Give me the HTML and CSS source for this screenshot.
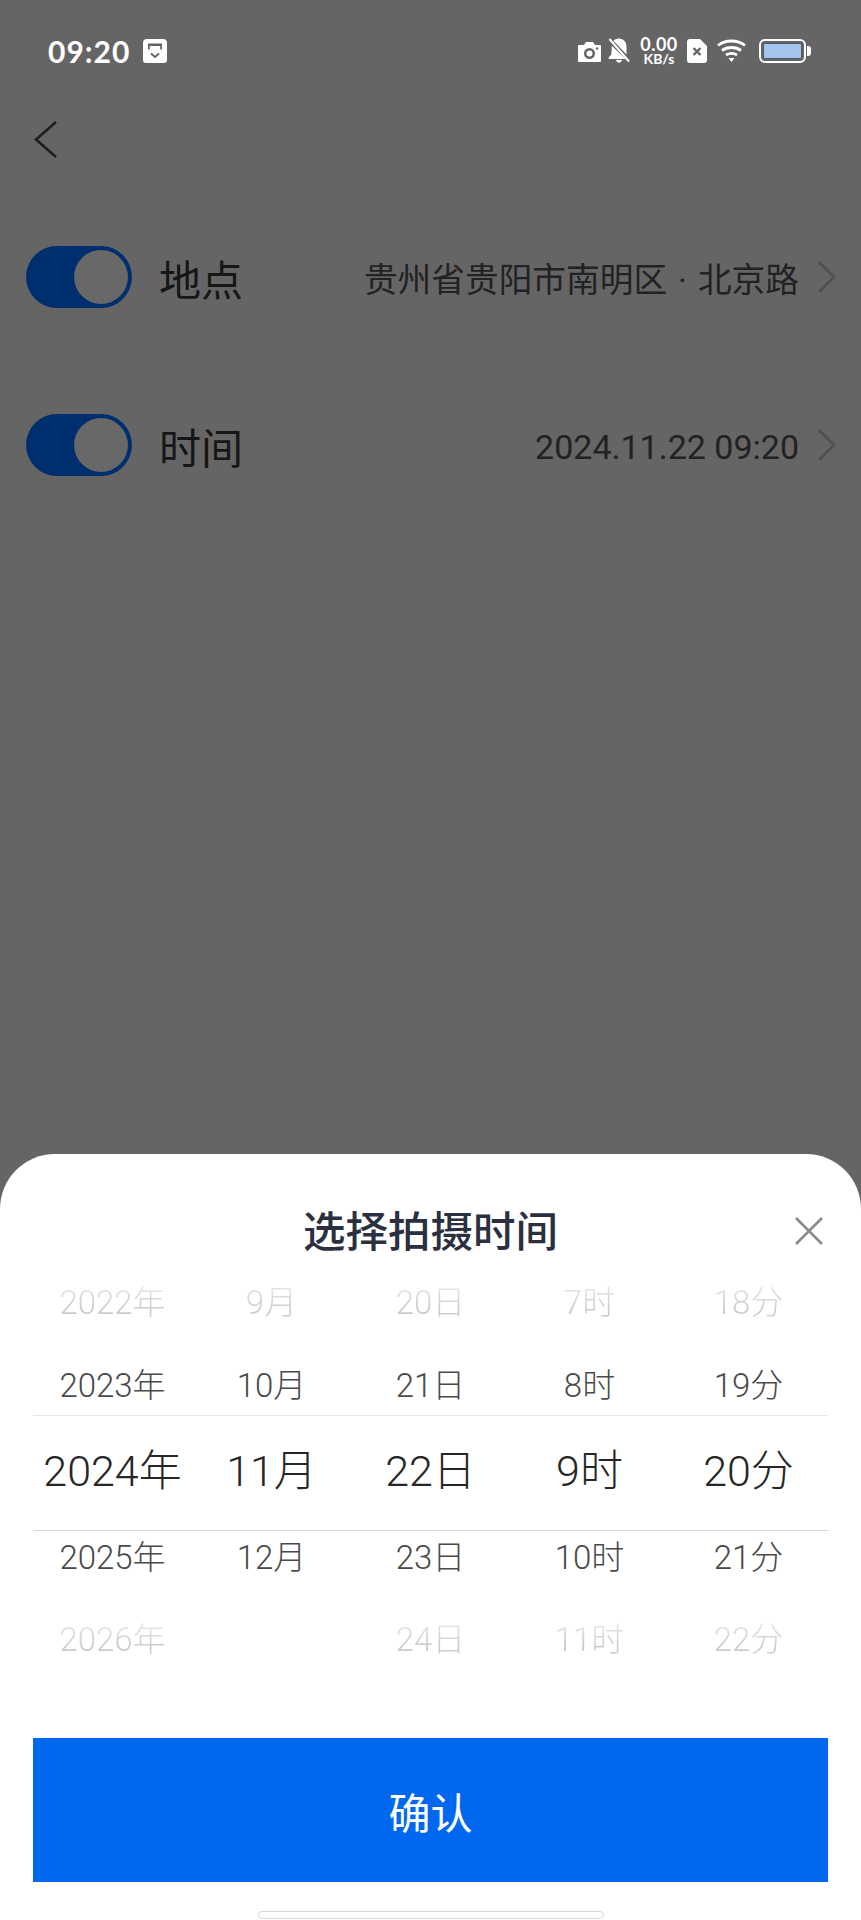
FILE: index.html
```html
<!DOCTYPE html>
<html lang="zh-CN">
<head>
    <meta charset="UTF-8">
    <meta name="viewport" content="width=device-width, initial-scale=1.0">
    <title>选择拍摄时间</title>
    <link rel="stylesheet" href="styles.css">
</head>
<body>
    <div class="page">
        <div class="status-bar">
            <div class="status-left">
                <span class="clock">09:20</span>
                <svg class="icon-storage" viewBox="0 0 24 24">
                    <path fill="#fff" fill-rule="evenodd" d="M4 0h16a4 4 0 0 1 4 4v17a3 3 0 0 1-3 3H3a3 3 0 0 1-3-3V4a4 4 0 0 1 4-4zM5 4.500v6h1.800V7h10.400v3.500H19v-6z"/>
                    <path fill="none" stroke="#666" stroke-width="2" d="M8 14.500l4 3.500 4-3.500"/>
                </svg>
            </div>
            <div class="status-right">
                <svg class="icon-camera" viewBox="0 0 23 20">
                    <path fill="#fff" fill-rule="evenodd" d="M1 3h5l2-3h7l2 3h5a1 1 0 0 1 1 1v15a1 1 0 0 1-1 1H1a1 1 0 0 1-1-1V4a1 1 0 0 1 1-1zM11.500 6a5.500 5.500 0 1 0 0 11a5.500 5.500 0 0 0 0-11zM11.500 8.500a3 3 0 1 1 0 6a3 3 0 0 1 0-6z"/>
                    <circle cx="19" cy="6.500" r="1.200" fill="#666"/>
                </svg>
                <svg class="icon-bell" viewBox="0 0 22 25">
                    <path fill="#fff" d="M5.500 2.800C7 1.200 9 .5 11 .5c4.800 0 7.500 3.600 7.500 8.500v7.500zM3.800 7.800L17.500 21H1.500c-1 0-1.300-1-.6-1.800L3.300 16.500c.4-2.800.3-5.800.5-8.700zM8 22h6c-.5 1.700-1.700 2.800-3 2.800S8.500 23.700 8 22z"/>
                    <path stroke="#fff" stroke-width="2" d="M1.500 1L21 23.500"/>
                </svg>
                <div class="net-speed">
                    <span class="net-value">0.00</span>
                    <span class="net-unit">KB/s</span>
                </div>
                <svg class="icon-sim" viewBox="0 0 20 24">
                    <path fill="#fff" d="M3 0h10l7 7v14a3 3 0 0 1-3 3H3a3 3 0 0 1-3-3V3a3 3 0 0 1 3-3z"/>
                    <path stroke="#666" stroke-width="2.400" d="M6.500 9l7 7M13.500 9l-7 7"/>
                </svg>
                <svg class="icon-wifi" viewBox="0 0 29 23">
                    <g fill="none" stroke="#fff" stroke-width="2.800">
                        <path d="M1 6.500C8.500 .5 20.500 .5 28 6.500"/>
                        <path d="M5 11.500c5.500-4 13.500-4 19 0"/>
                        <path d="M9 16c3.300-2 7.700-2 11 0"/>
                    </g>
                    <path fill="#fff" d="M11.500 19h6l-3 4z"/>
                </svg>
                <div class="battery">
                    <div class="battery-body"><div class="battery-fill"></div></div>
                    <div class="battery-tip"></div>
                </div>
            </div>
        </div>

        <div class="nav">
            <svg class="icon-back" viewBox="0 0 23 37">
                <path fill="none" stroke="#1e1e1e" stroke-width="2.600" d="M22 1L2 18.500 22 36"/>
            </svg>
        </div>

        <div class="setting-row">
            <div class="toggle"><div class="toggle-knob"></div></div>
            <span class="setting-label">地点</span>
            <span class="setting-value">贵州省贵阳市南明区<span class="value-dot">·</span>北京路</span>
            <svg class="icon-more" viewBox="0 0 18 32">
                <path fill="none" stroke="#505050" stroke-width="3" d="M1 1l15 15L1 31"/>
            </svg>
        </div>

        <div class="setting-row">
            <div class="toggle"><div class="toggle-knob"></div></div>
            <span class="setting-label">时间</span>
            <span class="setting-value date">2024.11.22 09:20</span>
            <svg class="icon-more" viewBox="0 0 18 32">
                <path fill="none" stroke="#505050" stroke-width="3" d="M1 1l15 15L1 31"/>
            </svg>
        </div>

        <div class="sheet">
            <div class="sheet-header">
                <h1 class="sheet-title">选择拍摄时间</h1>
                <svg class="icon-close" viewBox="0 0 28 28">
                    <path stroke="#8a8a8a" stroke-width="2.600" d="M1 1l26 26M27 1L1 27"/>
                </svg>
            </div>

            <div class="picker">
                <div class="picker-row far top">
                    <span>2022年</span><span>9月</span><span>20日</span><span>7时</span><span>18分</span>
                </div>
                <div class="picker-row near top">
                    <span>2023年</span><span>10月</span><span>21日</span><span>8时</span><span>19分</span>
                </div>
                <div class="picker-row current">
                    <span>2024年</span><span>11月</span><span>22日</span><span>9时</span><span>20分</span>
                </div>
                <div class="picker-row near bottom">
                    <span>2025年</span><span>12月</span><span>23日</span><span>10时</span><span>21分</span>
                </div>
                <div class="picker-row far bottom">
                    <span>2026年</span><span></span><span>24日</span><span>11时</span><span>22分</span>
                </div>
            </div>

            <button class="confirm-button">确认</button>
            <div class="home-bar"></div>
        </div>
    </div>
</body>
</html>
```

FILE: styles.css
```css
* {
    box-sizing: border-box;
}

body {
    margin: 0;
    font-family: Roboto, "Noto Sans CJK SC", sans-serif;
    background-color: #656565;
}

.page {
    display: flex;
    flex-direction: column;
    height: 1920px;
    overflow: hidden;
}

.status-bar {
    display: flex;
    justify-content: space-between;
    align-items: center;
    height: 27px;
    margin-top: 37px;
    padding: 0 50px 0 48px;
}

.status-left {
    display: flex;
    align-items: center;
    gap: 13px;
}

.clock {
    font-family: Lato, sans-serif;
    font-size: 30px;
    font-weight: 700;
    letter-spacing: 1px;
    color: #fff;
}

.icon-storage {
    width: 24px;
    height: 24px;
}

.status-right {
    display: flex;
    align-items: center;
}

.icon-camera {
    width: 23px;
    height: 20px;
    margin-top: 2px;
}

.icon-bell {
    width: 22px;
    height: 25px;
    margin-left: 7px;
}

.net-speed {
    display: flex;
    flex-direction: column;
    align-items: center;
    width: 40px;
    margin-left: 9px;
    color: #fff;
    font-family: Lato, sans-serif;
    font-weight: 700;
}

.net-value {
    font-size: 18px;
    line-height: 16px;
    letter-spacing: 0.5px;
}

.net-unit {
    font-size: 14px;
    line-height: 13px;
}

.icon-sim {
    width: 20px;
    height: 24px;
    margin-left: 8px;
}

.icon-wifi {
    width: 29px;
    height: 23px;
    margin-left: 10px;
}

.battery {
    display: flex;
    align-items: center;
    margin-left: 13px;
}

.battery-body {
    width: 47px;
    height: 24px;
    padding: 2px;
    border: 2px solid #fff;
    border-radius: 6px;
}

.battery-fill {
    height: 100%;
    background-color: #a3c5ee;
    border: 1px solid #4f5a68;
    border-radius: 2px;
}

.battery-tip {
    width: 4px;
    height: 10px;
    margin-left: 1px;
    background-color: #fff;
    border-radius: 0 3px 3px 0;
}

.nav {
    display: flex;
    align-items: flex-start;
    height: 182px;
    padding: 57px 0 0 34px;
}

.icon-back {
    width: 23px;
    height: 37px;
}

.setting-row {
    display: flex;
    align-items: center;
    height: 62px;
    margin-bottom: 105px;
    padding: 0 25px 0 26px;
}

.setting-row + .setting-row {
    margin-top: 1px;
}

.toggle {
    width: 106px;
    height: 62px;
    padding: 4px;
    display: flex;
    justify-content: flex-end;
    background-color: #002f6f;
    border-radius: 31px;
}

.toggle-knob {
    width: 54px;
    height: 54px;
    background-color: #686868;
    border-radius: 50%;
}

.setting-label {
    margin-left: 27px;
    font-size: 42px;
    color: #161616;
}

.setting-value {
    margin-left: auto;
    font-size: 33.7px;
    font-weight: 400;
    color: #222;
}

.setting-value.date {
    padding-top: 4px;
    font-size: 34px;
}

.value-dot {
    margin: 0 11px;
}

.icon-more {
    width: 18px;
    height: 32px;
    margin-left: 19px;
}

.sheet {
    display: flex;
    flex-direction: column;
    height: 766px;
    margin-top: auto;
    padding: 0 33px;
    background-color: #fff;
    border-radius: 55px 55px 0 0;
}

.sheet-header {
    position: relative;
    display: flex;
    justify-content: center;
    height: 114px;
    padding-top: 50px;
}

.sheet-title {
    margin: 0;
    font-size: 42.5px;
    font-weight: 500;
    line-height: 58px;
    color: #2b3040;
}

.icon-close {
    position: absolute;
    top: 63px;
    right: 5px;
    width: 28px;
    height: 28px;
}

.picker {
    display: flex;
    flex-direction: column;
}

.picker-row {
    display: grid;
    grid-template-columns: repeat(5, 1fr);
    align-items: center;
    text-align: center;
    font-size: 33px;
    font-weight: 300;
    padding-bottom: 4px;
}

.picker-row.far {
    height: 68px;
}

.picker-row.far span {
    justify-self: center;
    color: transparent;
    background: linear-gradient(#e8e8e8 20%, #c8c8c8 75%, #e4e4e4);
    -webkit-background-clip: text;
    background-clip: text;
}

.picker-row.far.bottom {
    margin-top: 24px;
}

.picker-row.near {
    color: #4a4a4a;
}

.picker-row.near.top {
    height: 60px;
    margin-top: 19px;
}

.picker-row.near.bottom {
    height: 50px;
}

.picker-row.current {
    height: 116px;
    padding-bottom: 12px;
    font-size: 43px;
    color: #262626;
    border-top: 1px solid #e6e6e6;
    border-bottom: 1px solid #d8d8d8;
}

.confirm-button {
    flex-shrink: 0;
    height: 144px;
    margin-top: 65px;
    padding: 0;
    font-family: inherit;
    font-size: 42px;
    color: #fff;
    background-color: #0068ee;
    border: none;
}

.home-bar {
    flex-shrink: 0;
    width: 346px;
    height: 8px;
    margin: 29px auto 0;
    background-color: #fff;
    border: 1px solid #d8d8d8;
    border-radius: 4px;
}
```
